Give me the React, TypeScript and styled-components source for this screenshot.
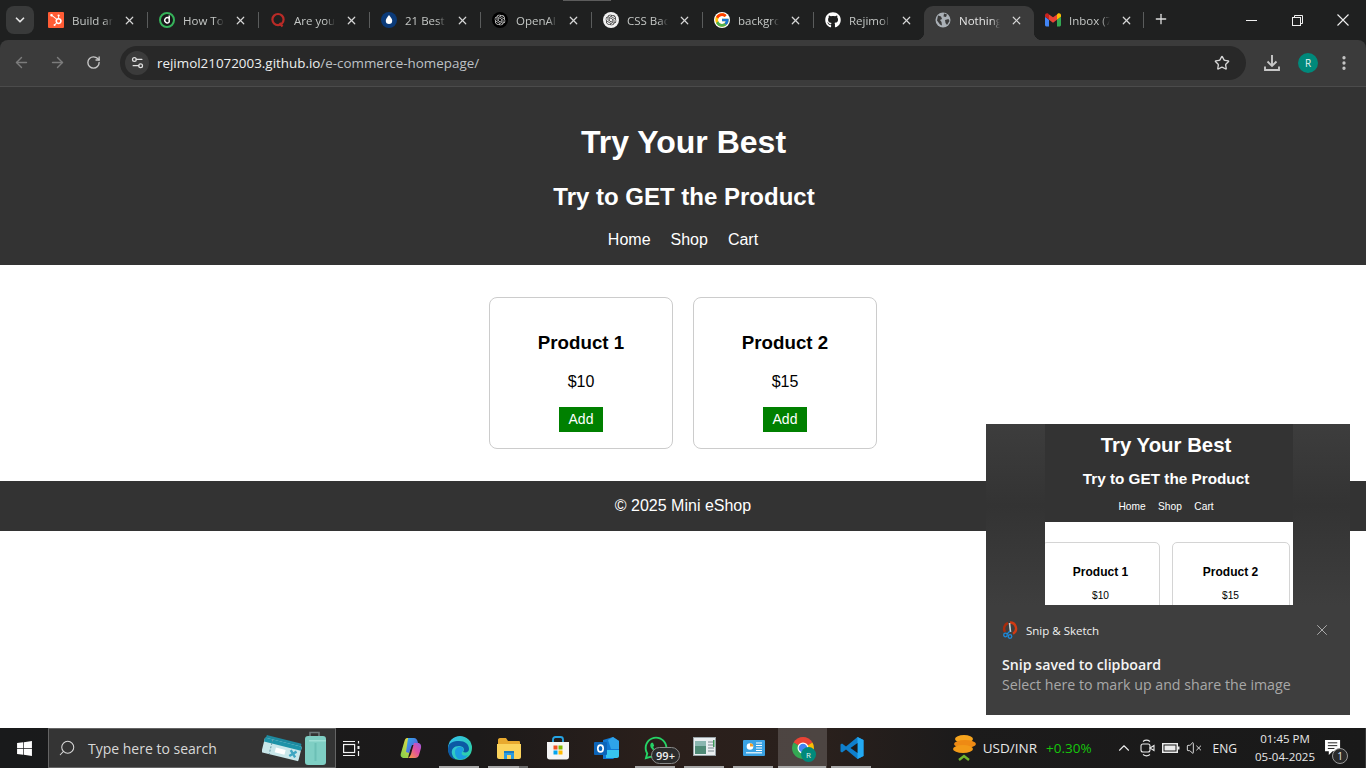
import React from 'react';
import styled, { createGlobalStyle } from 'styled-components';
import { ArrowLeft, ArrowRight, RotateCw, Settings2, Star, EllipsisVertical, ChevronDown, ChevronUp, Plus, X, Search, VolumeX } from 'lucide-react';
import { FaGithub, FaWindows, FaWhatsapp } from 'react-icons/fa';
import { FcGoogle } from 'react-icons/fc';
import { SiHubspot, SiOpenai } from 'react-icons/si';

const UI_FONT = '"Open Sans", "Noto Sans", sans-serif';
const PAGE_FONT = '"Liberation Sans", Arial, sans-serif';

const GlobalStyle = createGlobalStyle`
  html, body {
    margin: 0;
    padding: 0;
    height: 100%;
    overflow: hidden;
    background: #fff;
  }
  * { box-sizing: border-box; }
`;

const Screen = styled.div`
  position: relative;
  width: 1366px;
  height: 768px;
  display: flex;
  flex-direction: column;
  overflow: hidden;
  background: #1f2020;
  font-family: ${PAGE_FONT};
`;

/* ---------- browser chrome ---------- */

const TabStrip = styled.div`
  position: relative;
  height: 40px;
  flex: none;
  display: flex;
  align-items: flex-end;
  background: #1f2020;
  padding-left: 6px;
  font-family: ${UI_FONT};
`;

const TopMark = styled.div`
  position: absolute;
  left: 563px;
  top: 0;
  width: 48px;
  height: 1px;
  background: #5c5c5c;
`;

const TabSearch = styled.div`
  width: 28px;
  height: 28px;
  margin: 0 3px 6px 0;
  border-radius: 8px;
  background: #393a3a;
  color: #e3e3e3;
  display: flex;
  align-items: center;
  justify-content: center;
`;

const Tab = styled.div<{ $active?: boolean; $sep?: boolean; $narrow?: boolean }>`
  position: relative;
  width: ${p => (p.$narrow ? '110px' : '111px')};
  height: 34px;
  flex: none;
  display: flex;
  align-items: center;
  padding: 0 0 6px 11px;
  color: ${p => (p.$active ? '#e6e6e6' : '#c4c7c5')};
  background: ${p => (p.$active ? '#3b3b3b' : 'transparent')};
  border-radius: 9px 9px 0 0;

  ${p => p.$sep && `
    &::after {
      content: '';
      position: absolute;
      right: 0;
      top: 6px;
      width: 1px;
      height: 16px;
      background: #5a5c5c;
    }
  `}
`;

const Flare = styled.span<{ $side: 'left' | 'right' }>`
  position: absolute;
  bottom: 0;
  ${p => p.$side}: -8px;
  width: 8px;
  height: 8px;
  background: radial-gradient(circle at ${p => (p.$side === 'left' ? '0 0' : '100% 0')}, transparent 8px, #3b3b3b 8.5px);
`;

const Favicon = styled.span`
  width: 16px;
  height: 16px;
  flex: none;
  display: flex;
  align-items: center;
  justify-content: center;
`;

const GoogleMark = styled(FcGoogle)`
  background: #fff;
  border-radius: 50%;
`;

const TabTitle = styled.span`
  width: 41px;
  margin-left: 8px;
  font-size: 11.5px;
  white-space: nowrap;
  overflow: hidden;
  -webkit-mask-image: linear-gradient(90deg, #000 78%, transparent);
  mask-image: linear-gradient(90deg, #000 78%, transparent);
`;

const TabClose = styled.span`
  margin-left: 10px;
  display: flex;
  color: #d6d6d6;
`;

const NewTab = styled.div`
  margin: 0 0 13px 9px;
  display: flex;
  color: #dcdcdc;
`;

const WindowButtons = styled.div`
  margin-left: auto;
  height: 40px;
  align-self: flex-start;
  display: flex;
`;

const WindowButton = styled.div`
  width: 46px;
  display: flex;
  align-items: center;
  justify-content: center;
  color: #f0f0f0;
`;

const Toolbar = styled.div`
  height: 47px;
  flex: none;
  display: flex;
  align-items: center;
  background: #3b3b3b;
  border-radius: 8px 8px 0 0;
  border-bottom: 1px solid #4b4b4b;
  padding: 0 0 1px 3px;
  color: #c7c7c7;
`;

const NavButton = styled.div<{ $dim?: boolean }>`
  width: 36px;
  display: flex;
  justify-content: center;
  color: ${p => (p.$dim ? '#7c7c7c' : '#c7c7c7')};
`;

const Omnibox = styled.div`
  width: 1126px;
  height: 34px;
  margin-left: 9px;
  border-radius: 17px;
  background: #282828;
  display: flex;
  align-items: center;
  padding: 0 16px 0 5px;
  font-family: ${UI_FONT};
`;

const SiteInfo = styled.div`
  width: 24px;
  height: 24px;
  border-radius: 50%;
  background: #3b3b3b;
  color: #e0e0e0;
  display: flex;
  align-items: center;
  justify-content: center;
`;

const Url = styled.div`
  margin-left: 8px;
  flex: 1;
  font-size: 13.4px;
  color: #bdc1c6;
  white-space: nowrap;

  b {
    font-weight: 400;
    color: #eef0f0;
  }
`;

const ToolbarEnd = styled.div`
  margin-left: 17px;
  flex: 1;
  display: flex;
  align-items: center;
  justify-content: space-between;
  padding-right: 13px;
`;

const Avatar = styled.div`
  width: 20px;
  height: 20px;
  border-radius: 50%;
  background: #00897b;
  color: #e8f5f3;
  font: 400 10px ${UI_FONT};
  display: flex;
  align-items: center;
  justify-content: center;
`;

/* ---------- the page in the browser ---------- */

const Page = styled.div`
  flex: 1;
  background: #fff;
`;

const SiteHeader = styled.header`
  background: #333;
  color: #fff;
  text-align: center;
  padding: 16px;

  h1 {
    margin: 21.44px 0 21.44px 1px;
    font-size: 32px;
  }
  h2 {
    margin: 19.92px 0 19.92px 2px;
    font-size: 24px;
  }
`;

const SiteNav = styled.nav`
  display: flex;
  justify-content: center;
  gap: 20px;
  font-size: 16px;
`;

const Products = styled.main`
  display: flex;
  justify-content: center;
  gap: 20px;
  padding: 32px;
`;

const ProductCard = styled.div`
  width: 184px;
  height: 152px;
  border: 1px solid #ccc;
  border-radius: 8px;
  padding: 15px;
  text-align: center;

  h3 {
    margin: 19.5px 0 18.72px;
    font-size: 18.72px;
    line-height: 22px;
  }
  p {
    margin: 0 0 16px;
    font-size: 16px;
    line-height: 18px;
  }
`;

const AddButton = styled.button`
  width: 44px;
  height: 25px;
  padding: 0 0 2px;
  border: none;
  background: green;
  color: #fff;
  font: 14px ${PAGE_FONT};
`;

const SiteFooter = styled.footer`
  height: 50px;
  background: #333;
  color: #fff;
  font-size: 16px;
  text-align: center;
  line-height: 49px;
`;

/* ---------- snip toast ---------- */

const Toast = styled.div`
  position: absolute;
  right: 16px;
  bottom: 53px;
  width: 364px;
  height: 291px;
  background: #3e3e3e;
  font-family: ${UI_FONT};
`;

const Hero = styled.div`
  height: 181px;
  display: flex;
  justify-content: center;
  background: linear-gradient(180deg, #3d3d3d 0%, #373737 28%, #333 45%, #373737 65%, #3e3e3e 100%);
`;

const Preview = styled.div`
  width: 248px;
  margin-left: 1px;
  background: #fff;
  overflow: hidden;
  font-family: ${PAGE_FONT};
`;

const MiniHeader = styled.div`
  height: 98px;
  background: #333;
  color: #fff;
  text-align: center;
  padding: 9px 5px 0 0;

  h1 {
    margin: 0;
    font-size: 20.4px;
    line-height: 24px;
  }
  h2 {
    margin: 13px 0 0;
    font-size: 15.3px;
    line-height: 18px;
  }
`;

const MiniNav = styled.div`
  margin-top: 13px;
  display: flex;
  justify-content: center;
  gap: 12.5px;
  font-size: 10.2px;
  line-height: 12px;
`;

const MiniProducts = styled.div`
  display: flex;
  gap: 12px;
  margin: 20px 0 0 -3px;
`;

const MiniCard = styled.div`
  width: 118px;
  height: 98px;
  flex: none;
  border: 1px solid #d4d4d4;
  border-radius: 5px;
  text-align: center;
  color: #000;
  padding-top: 22px;

  h3 {
    margin: 0;
    font-size: 12px;
    line-height: 15px;
  }
  p {
    margin: 10px 0 0;
    font-size: 10.2px;
    line-height: 12px;
  }
`;

const ToastApp = styled.div`
  display: flex;
  align-items: center;
  height: 20px;
  margin: 15px 19px 0 16px;
  color: #f0f0f0;
  font-size: 11.5px;
`;

const AppName = styled.span`
  margin-left: 8px;
  flex: 1;
`;

const ToastClose = styled.span`
  display: flex;
  color: #b5b5b5;
`;

const ToastTitle = styled.div`
  margin: 15px 0 0 16px;
  color: #f4f4f4;
  font-size: 14.2px;
  font-weight: 600;
  line-height: 20px;
`;

const ToastText = styled.div`
  margin-left: 16px;
  color: #a8a8a8;
  font-size: 14.2px;
  line-height: 20px;
`;

/* ---------- taskbar ---------- */

const Taskbar = styled.div`
  height: 40px;
  flex: none;
  display: flex;
  align-items: stretch;
  background: linear-gradient(90deg, #191a1b 0%, #1c1a1a 35%, #2a1f1b 48%, #2a201c 60%, #1c1b1b 70%, #191919 100%);
  border-right: 1px solid #3a3a3a;
  font-family: ${UI_FONT};
  color: #e8e8e8;
`;

const StartButton = styled.div`
  width: 48px;
  display: flex;
  align-items: center;
  justify-content: center;
  color: #fff;
`;

const SearchBox = styled.div`
  width: 288px;
  display: flex;
  align-items: center;
  background: #343434;
  border: 1px solid #646464;
  padding: 0 9px;
  color: #d8d8d8;
  font-size: 14px;
`;

const SearchGlyph = styled.span`
  display: flex;
  transform: scaleX(-1);
`;

const SearchLabel = styled.span`
  margin-left: 12px;
  flex: 1;
`;

const TaskView = styled.div`
  width: 50px;
  padding-left: 7px;
  display: flex;
  align-items: center;
`;

const TaskIcon = styled.div<{ $open?: boolean; $active?: boolean; $stacked?: boolean }>`
  position: relative;
  width: 49px;
  display: flex;
  align-items: center;
  justify-content: center;
  background: ${p => (p.$active ? 'rgba(255,255,255,0.17)' : 'transparent')};

  ${p => p.$open && `
    &::after {
      content: '';
      position: absolute;
      bottom: 0;
      left: ${p.$active ? '0' : '4px'};
      right: ${p.$active ? '1px' : '5px'};
      height: 2px;
      background: ${p.$stacked ? 'linear-gradient(90deg, #a8a8a8 77%, #6a6a6a 77%)' : '#a8a8a8'};
    }
  `}
`;

const CountBadge = styled.span`
  position: absolute;
  left: 20px;
  top: 19px;
  width: 29px;
  height: 17px;
  border-radius: 9px;
  background: #2b2b2b;
  border: 1px solid #8a8a8a;
  color: #f0f0f0;
  font-size: 11px;
  font-weight: 600;
  line-height: 15px;
  text-align: center;
`;

const ProfileBadge = styled.span`
  position: absolute;
  left: 23px;
  top: 19px;
  width: 15px;
  height: 15px;
  border-radius: 50%;
  background: #00897b;
  color: #e0f2f0;
  font-size: 8px;
  line-height: 15px;
  text-align: center;
`;

const Ticker = styled.div`
  margin-left: auto;
  display: flex;
  align-items: center;
  font-size: 13.5px;
`;

const Rate = styled.span`
  margin-left: 7px;
`;

const Change = styled.span`
  margin-left: 9px;
  color: #16c60c;
`;

const Tray = styled.div`
  margin-left: 23px;
  display: flex;
  align-items: center;
  gap: 6px;
  color: #eaeaea;
`;

const TrayChevron = styled(ChevronUp)`
  margin-right: 1px;
`;

const Lang = styled.span`
  margin-left: 5px;
  font-size: 12px;
`;

const Clock = styled.div`
  margin-left: 18px;
  width: 60px;
  padding-top: 2px;
  text-align: center;
  font-size: 11.5px;
  line-height: 18px;
  white-space: nowrap;
`;

const Notifications = styled.div`
  position: relative;
  margin: 0 23px 0 10px;
  display: flex;
  align-items: center;
`;

const NoticeCount = styled.span`
  position: absolute;
  left: 7px;
  top: 20px;
  width: 16px;
  height: 16px;
  border-radius: 50%;
  background: #2a2a2a;
  border: 1px solid #9a9a9a;
  font-size: 10px;
  line-height: 14px;
  text-align: center;
`;

/* ---------- drawn icons ---------- */

const HubspotIcon = () => (
  <svg width="16" height="16" viewBox="0 0 16 16">
    <rect width="16" height="16" rx="1" fill="#ff5c35" />
    <g transform="translate(2 2) scale(0.5)"><SiHubspot size={24} color="#fff" /></g>
  </svg>
);

const RingD = () => (
  <svg width="16" height="16" viewBox="0 0 16 16">
    <circle cx="8" cy="8" r="7" fill="#17181a" stroke="#36b35a" strokeWidth="2" />
    <path d="M10.2 3.500v7" stroke="#fff" strokeWidth="1.500" />
    <path d="M10 6.200a2.600 2.600 0 1 0 0 4" fill="none" stroke="#fff" strokeWidth="1.400" />
  </svg>
);

const QuoraIcon = () => (
  <svg width="16" height="16" viewBox="0 0 16 16" fill="none" stroke="#b92b27" strokeWidth="2.200">
    <circle cx="8" cy="7.600" r="5.600" />
    <path d="M9.500 11l3 3.400" />
  </svg>
);

const DropIcon = () => (
  <svg width="16" height="16" viewBox="0 0 16 16">
    <circle cx="8" cy="8" r="8" fill="#0b3a78" />
    <path d="M8 3c2 2.600 3.200 4.200 3.200 5.800a3.200 3.200 0 0 1-6.400 0C4.800 7.200 6 5.600 8 3z" fill="#fff" />
  </svg>
);

const OpenAiBadge = ({ bg, fg }: { bg: string; fg: string }) => (
  <svg width="16" height="16" viewBox="0 0 16 16">
    <circle cx="8" cy="8" r="8" fill={bg} />
    <g transform="translate(2.500 2.500) scale(0.458)"><SiOpenai size={24} color={fg} /></g>
  </svg>
);

const GlobeIcon = () => (
  <svg width="16" height="16" viewBox="0 0 16 16">
    <circle cx="8" cy="8" r="7.500" fill="#aab0b6" />
    <path d="M3 3.500l3 1 1 2.500-2 1 1.500 2 .5 3.500-2-1L2 8.500zM9 1.500l3 1-1 2.500-2.500-.5zM10 8l3.500-1 1 2-2.500 4-1.500-2z" fill="#3b3b3b" />
  </svg>
);

const GmailIcon = () => (
  <svg width="16" height="16" viewBox="2 3 20 18">
    <path fill="#4285F4" d="M3.600 20H7v-8.400L2 7.900v10.500C2 19.300 2.700 20 3.600 20z" />
    <path fill="#34A853" d="M17 20h3.400c.9 0 1.600-.7 1.600-1.600V7.900l-5 3.700z" />
    <path fill="#FBBC04" d="M17 5v6.600l5-3.700v-2c0-2-2.300-3.100-3.900-1.900z" />
    <path fill="#EA4335" d="M7 11.600V5l5 3.700L17 5v6.600l-5 3.700z" />
    <path fill="#C5221F" d="M2 5.900v2l5 3.700V5L5.900 4C4.300 2.800 2 3.900 2 5.900z" />
  </svg>
);

const RestoreIcon = () => (
  <svg width="11" height="11" viewBox="0 0 11 11" fill="none" stroke="currentColor">
    <rect x="0.500" y="2.500" width="8" height="8" />
    <path d="M2.500 2.500V.5h8v8h-2" />
  </svg>
);

const MinimizeIcon = () => (
  <svg width="11" height="11" viewBox="0 0 11 11" stroke="currentColor"><path d="M0 5.500h11" /></svg>
);

const CloseIcon = () => (
  <svg width="12" height="12" viewBox="0 0 12 12" stroke="currentColor" strokeWidth="1.100"><path d="M.5.5l11 11M11.500.5l-11 11" /></svg>
);

const DownloadIcon = () => (
  <svg width="18" height="18" viewBox="0 0 18 18" fill="none" stroke="currentColor" strokeWidth="1.900">
    <path d="M9 1v11M4.500 7.500L9 12l4.500-4.500M2 12.500V16h14v-3.500" />
  </svg>
);

const SnipIcon = () => (
  <svg width="16" height="18" viewBox="0 0 16 18" fill="none">
    <path d="M8 1.500a6 6 0 0 1 3 11.200" stroke="#d13a12" strokeWidth="2.400" />
    <path d="M6 2a6 6 0 0 0-3 9" stroke="#a82c0c" strokeWidth="2.400" />
    <path d="M7.500 2l1 9" stroke="#cfd3d6" strokeWidth="1.600" />
    <circle cx="3.500" cy="14" r="1.800" stroke="#1e88d8" strokeWidth="1.300" />
    <circle cx="8" cy="15.500" r="1.800" stroke="#1e88d8" strokeWidth="1.300" />
    <path d="M5 13l3-3" stroke="#1e88d8" strokeWidth="1.300" />
  </svg>
);

const TravelArt = () => (
  <svg width="64" height="36" viewBox="0 0 64 36">
    <g transform="rotate(14 20 18)">
      <rect x="2" y="9" width="36" height="15" rx="1" fill="#1d8aa0" />
      <rect x="1" y="12" width="38" height="15" rx="1" fill="#c9e7ea" />
      <rect x="1" y="12" width="38" height="4" fill="#1d93a8" />
      <rect x="14" y="19" width="10" height="5" fill="#fff" />
      <path d="M29 18l6 6M35 18l-6 6" stroke="#3fa6c2" strokeWidth="2.400" />
      <path d="M9 12v15" stroke="#6a9aa6" strokeDasharray="2 1.500" />
    </g>
    <path d="M48 6V2.500h9V6" fill="none" stroke="#6e7a7c" strokeWidth="1.600" />
    <rect x="43" y="6" width="21" height="29" rx="3" fill="#7fcfc4" />
    <rect x="47" y="10" width="17" height="1.500" fill="#9fe0d6" />
    <rect x="52.500" y="13" width="2" height="18" fill="#6cc0b5" />
  </svg>
);

const TaskViewIcon = () => (
  <svg width="17" height="17" viewBox="0 0 17 17" fill="none" stroke="#f2f2f2" strokeWidth="1.200">
    <rect x=".6" y="4.500" width="11" height="8" />
    <path d="M0 1.500h12M0 15.500h12M15.500 1v2.500M15.500 11v5" />
    <rect x="14.500" y="6" width="2" height="3" fill="#f2f2f2" stroke="none" />
  </svg>
);

const CopilotIcon = () => (
  <svg width="24" height="24" viewBox="0 0 24 24">
    <defs>
      <linearGradient id="copilotA" x1="0" y1="0" x2="1" y2="1">
        <stop offset="0" stopColor="#2bb3ee" />
        <stop offset="1" stopColor="#6a3fd6" />
      </linearGradient>
      <linearGradient id="copilotB" x1="0" y1="1" x2="1" y2="0">
        <stop offset="0" stopColor="#f9a23a" />
        <stop offset=".55" stopColor="#e44fa0" />
        <stop offset="1" stopColor="#9a5be0" />
      </linearGradient>
      <linearGradient id="copilotC" x1="0" y1="1" x2="1" y2="0">
        <stop offset="0" stopColor="#7fd14a" />
        <stop offset="1" stopColor="#f7d84a" />
      </linearGradient>
    </defs>
    <path d="M8 2h6l-5 20H5c-3 0-4-2.500-3-5l3.500-12C6 3 7 2 8 2z" fill="url(#copilotC)" />
    <path d="M9 2h6c2 0 3 1.500 3.500 3l1 4H13l-3 8-3-1z" fill="url(#copilotA)" />
    <path d="M15 7h4c2.500 0 3.500 2.500 3 5l-2 7c-.5 2-2 3-4 3H9c1.500-1 2.500-2.500 3-4z" fill="url(#copilotB)" />
  </svg>
);

const EdgeIcon = () => (
  <svg width="26" height="26" viewBox="0 0 26 26">
    <defs>
      <linearGradient id="edgeA" x1="0" y1="0" x2="1" y2="1">
        <stop offset="0" stopColor="#35c1f1" />
        <stop offset="1" stopColor="#2bd29a" />
      </linearGradient>
    </defs>
    <circle cx="13" cy="13" r="12" fill="url(#edgeA)" />
    <path d="M1 14C1 7 7 6 12 6c6 0 10 3 10 8 0 3-3 4-6 3 2-2 1-6-4-6-5 0-8 3-7 8 .5 2 2 4.500 4 5.500C4 24 1 20 1 14z" fill="#0c59a4" />
    <path d="M8 17c0-3 2-5 5-5 3 0 4 2 3 4-1 .8-2 2-1 3.500 1 1.500 4 1.500 6 .5-2 3-5 4.500-8 4.500-3 0-5-4-5-7.500z" fill="#1b9de2" />
  </svg>
);

const FolderIcon = () => (
  <svg width="24" height="22" viewBox="0 0 24 22">
    <path d="M1 3c0-1 .5-2 2-2h6l2 3h11c1 0 1 1 1 1v3H1z" fill="#e8a92f" />
    <path d="M0 7h24v13c0 1-1 2-2 2H2c-1 0-2-1-2-2z" fill="#fbd35c" />
    <path d="M7 22v-7h10v7h-3v-4h-4v4z" fill="#2a9be0" />
    <rect x="7" y="14" width="10" height="2" fill="#1a7cc0" />
  </svg>
);

const StoreIcon = () => (
  <svg width="24" height="24" viewBox="0 0 24 24">
    <path d="M7 6V3.500C7 2 8 1 9.500 1h5C16 1 17 2 17 3.500V6" fill="none" stroke="#25a4e4" strokeWidth="1.800" />
    <path d="M1 6h22v15c0 1.500-1 2.500-2.500 2.500h-17C2 23.500 1 22.500 1 21z" fill="#f4f4f4" />
    <rect x="7.500" y="9.500" width="4" height="4" fill="#f25022" />
    <rect x="12.500" y="9.500" width="4" height="4" fill="#7fba00" />
    <rect x="7.500" y="14.500" width="4" height="4" fill="#00a4ef" />
    <rect x="12.500" y="14.500" width="4" height="4" fill="#ffb900" />
  </svg>
);

const OutlookIcon = () => (
  <svg width="26" height="24" viewBox="0 0 26 24">
    <path d="M9 4l10-3 6 4v14l-6 4H9z" fill="#0f78d4" />
    <path d="M14 4l5-3 6 4v8h-8z" fill="#2ea3ea" />
    <path d="M12 14h13v6c0 1-1 2-2 2H12z" fill="#37c6f0" />
    <rect x="0" y="6" width="13" height="13" rx="1" fill="#0c64b8" />
    <ellipse cx="6.500" cy="12.500" rx="2.700" ry="3.400" fill="none" stroke="#fff" strokeWidth="1.700" />
  </svg>
);

const ReaderIcon = () => (
  <svg width="24" height="22" viewBox="0 0 24 22">
    <rect x=".5" y=".5" width="22" height="18" fill="#e9eef0" stroke="#9aa4a8" />
    <rect x="2" y="4" width="11" height="13" fill="#4f8a76" />
    <rect x="2" y="4" width="11" height="5" fill="#8ab6b0" />
    <path d="M15 5h6M15 8h6M15 11h6M15 14h6" stroke="#7a8a90" />
    <rect x="20" y="3" width="1.500" height="7" fill="#3f9a5a" />
  </svg>
);

const ChartAppIcon = () => (
  <svg width="22" height="16" viewBox="0 0 22 16">
    <rect width="22" height="16" rx="1" fill="#3aa2e4" />
    <circle cx="7" cy="6.500" r="3.300" fill="#fff" />
    <path d="M7 6.500V3.200A3.300 3.300 0 0 1 10.300 6.500z" fill="#f3a02c" />
    <path d="M13 3h6M13 5.500h6M13 8h6M13 10.500h6" stroke="#fff" strokeWidth="1.200" />
    <rect x="3" y="12" width="16" height="1.500" fill="#cfe9f8" />
  </svg>
);

const ChromeIcon = () => (
  <svg width="24" height="24" viewBox="0 0 24 24">
    <path d="M12 12L2.500 6.500A11 11 0 0 1 21.500 6.500z" fill="#ea4335" />
    <path d="M12 12l9.500-5.500A11 11 0 0 1 12 23z" fill="#fbbc04" />
    <path d="M12 12v11A11 11 0 0 1 2.500 6.500z" fill="#34a853" />
    <circle cx="12" cy="12" r="5.500" fill="#fff" />
    <circle cx="12" cy="12" r="4.300" fill="#4285f4" />
  </svg>
);

const VsCodeIcon = () => (
  <svg width="24" height="24" viewBox="0 0 24 24">
    <path d="M17.500 1L23.500 4v16l-6 3L6 13.500 2 16.500.5 15.500v-7L2 7.500l4 3z" fill="#0f7fcc" />
    <path d="M17.500 1L23.500 4v16l-6 3z" fill="#23a9f2" />
    <path d="M17.500 7l-7 5 7 5z" fill="#1c1b1b" />
  </svg>
);

const CoinsIcon = () => (
  <svg width="24" height="30" viewBox="0 0 24 30">
    <ellipse cx="12" cy="6" rx="9" ry="4" fill="#f7a51e" />
    <ellipse cx="13" cy="11" rx="11" ry="4" fill="#ee8a14" />
    <ellipse cx="11" cy="16" rx="10" ry="4" fill="#f29a18" />
    <path d="M7 27l5-4 5 4" fill="none" stroke="#6fb52c" strokeWidth="2.400" />
  </svg>
);

const MeetIcon = () => (
  <svg width="16" height="18" viewBox="0 0 16 18" fill="none" stroke="#eaeaea" strokeWidth="1.100">
    <rect x="1" y="5" width="9" height="8" rx="2" />
    <path d="M10 9l4-2.500v5z" />
    <path d="M3 2.500c2-1.500 5-1.500 7 0M3 15.500c2 1.500 5 1.500 7 0" />
  </svg>
);

const BatteryIcon = () => (
  <svg width="18" height="12" viewBox="0 0 18 12">
    <rect x=".75" y="1.750" width="14.500" height="8.500" fill="none" stroke="#eaeaea" strokeWidth="1.500" />
    <rect x="2.500" y="3.500" width="11" height="5" fill="#eaeaea" />
    <rect x="16" y="4.500" width="1.500" height="3" fill="#eaeaea" />
  </svg>
);

const NoticeIcon = () => (
  <svg width="17" height="16" viewBox="0 0 18 17">
    <path d="M0 0h16v12H8l-4 4v-4H0z" fill="#fff" />
    <path d="M3 3h10M3 6h10M3 9h7" stroke="#1a1a1a" />
  </svg>
);

/* ---------- data ---------- */

const tabs: { title: string; icon: React.ReactNode; active?: boolean; sep?: boolean; narrow?: boolean }[] = [
  { title: 'Build an', icon: <HubspotIcon />, sep: true },
  { title: 'How To', icon: <RingD />, sep: true },
  { title: 'Are you', icon: <QuoraIcon />, sep: true },
  { title: '21 Best', icon: <DropIcon />, sep: true },
  { title: 'OpenAI', icon: <OpenAiBadge bg="#000" fg="#e8e8e8" />, sep: true },
  { title: 'CSS Bac', icon: <OpenAiBadge bg="#f2f2f2" fg="#222" />, sep: true },
  { title: 'backgro', icon: <GoogleMark size={16} />, sep: true },
  { title: 'Rejimol', icon: <FaGithub size={16} color="#fff" />, narrow: true },
  { title: 'Nothing', icon: <GlobeIcon />, active: true, narrow: true },
  { title: 'Inbox (7', icon: <GmailIcon />, sep: true, narrow: true },
];

const products = [
  { name: 'Product 1', price: '$10' },
  { name: 'Product 2', price: '$15' },
];

const navLinks = ['Home', 'Shop', 'Cart'];

export default function App() {
  return (
    <Screen>
      <GlobalStyle />

      <TabStrip>
        <TopMark />
        <TabSearch><ChevronDown size={14} strokeWidth={3} /></TabSearch>
        {tabs.map(t => (
          <Tab key={t.title} $active={t.active} $sep={t.sep} $narrow={t.narrow}>
            {t.active && <Flare $side="left" />}
            {t.active && <Flare $side="right" />}
            <Favicon>{t.icon}</Favicon>
            <TabTitle>{t.title}</TabTitle>
            <TabClose><X size={13} strokeWidth={2.2} /></TabClose>
          </Tab>
        ))}
        <NewTab><Plus size={16} strokeWidth={2} /></NewTab>
        <WindowButtons>
          <WindowButton><MinimizeIcon /></WindowButton>
          <WindowButton><RestoreIcon /></WindowButton>
          <WindowButton><CloseIcon /></WindowButton>
        </WindowButtons>
      </TabStrip>

      <Toolbar>
        <NavButton $dim><ArrowLeft size={17} /></NavButton>
        <NavButton $dim><ArrowRight size={17} /></NavButton>
        <NavButton><RotateCw size={15} strokeWidth={2.2} /></NavButton>
        <Omnibox>
          <SiteInfo><Settings2 size={15} /></SiteInfo>
          <Url><b>rejimol21072003.github.io</b>/e-commerce-homepage/</Url>
          <Star size={16} strokeWidth={2} color="#d6d6d6" />
        </Omnibox>
        <ToolbarEnd>
          <DownloadIcon />
          <Avatar>R</Avatar>
          <EllipsisVertical size={18} strokeWidth={2.4} />
        </ToolbarEnd>
      </Toolbar>

      <Page>
        <SiteHeader>
          <h1>Try Your Best</h1>
          <h2>Try to GET the Product</h2>
          <SiteNav>
            {navLinks.map(l => <span key={l}>{l}</span>)}
          </SiteNav>
        </SiteHeader>
        <Products>
          {products.map(p => (
            <ProductCard key={p.name}>
              <h3>{p.name}</h3>
              <p>{p.price}</p>
              <AddButton>Add</AddButton>
            </ProductCard>
          ))}
        </Products>
        <SiteFooter>© 2025 Mini eShop</SiteFooter>
      </Page>

      <Taskbar>
        <StartButton><FaWindows size={17} /></StartButton>
        <SearchBox>
          <SearchGlyph><Search size={18} strokeWidth={1.4} /></SearchGlyph>
          <SearchLabel>Type here to search</SearchLabel>
          <TravelArt />
        </SearchBox>
        <TaskView><TaskViewIcon /></TaskView>
        <TaskIcon><CopilotIcon /></TaskIcon>
        <TaskIcon $open><EdgeIcon /></TaskIcon>
        <TaskIcon $open $stacked><FolderIcon /></TaskIcon>
        <TaskIcon><StoreIcon /></TaskIcon>
        <TaskIcon><OutlookIcon /></TaskIcon>
        <TaskIcon $open>
          <FaWhatsapp size={26} color="#25d366" />
          <CountBadge>99+</CountBadge>
        </TaskIcon>
        <TaskIcon $open><ReaderIcon /></TaskIcon>
        <TaskIcon $open><ChartAppIcon /></TaskIcon>
        <TaskIcon $open $active>
          <ChromeIcon />
          <ProfileBadge>R</ProfileBadge>
        </TaskIcon>
        <TaskIcon $open><VsCodeIcon /></TaskIcon>

        <Ticker>
          <CoinsIcon />
          <Rate>USD/INR</Rate>
          <Change>+0.30%</Change>
        </Ticker>
        <Tray>
          <TrayChevron size={18} strokeWidth={1.5} />
          <MeetIcon />
          <BatteryIcon />
          <VolumeX size={16} strokeWidth={1.4} />
          <Lang>ENG</Lang>
        </Tray>
        <Clock>01:45 PM<br />05-04-2025</Clock>
        <Notifications>
          <NoticeIcon />
          <NoticeCount>1</NoticeCount>
        </Notifications>
      </Taskbar>

      <Toast>
        <Hero>
          <Preview>
            <MiniHeader>
              <h1>Try Your Best</h1>
              <h2>Try to GET the Product</h2>
              <MiniNav>
                {navLinks.map(l => <span key={l}>{l}</span>)}
              </MiniNav>
            </MiniHeader>
            <MiniProducts>
              {products.map(p => (
                <MiniCard key={p.name}>
                  <h3>{p.name}</h3>
                  <p>{p.price}</p>
                </MiniCard>
              ))}
            </MiniProducts>
          </Preview>
        </Hero>
        <ToastApp>
          <SnipIcon />
          <AppName>Snip &amp; Sketch</AppName>
          <ToastClose><X size={18} strokeWidth={1.2} /></ToastClose>
        </ToastApp>
        <ToastTitle>Snip saved to clipboard</ToastTitle>
        <ToastText>Select here to mark up and share the image</ToastText>
      </Toast>
    </Screen>
  );
}
